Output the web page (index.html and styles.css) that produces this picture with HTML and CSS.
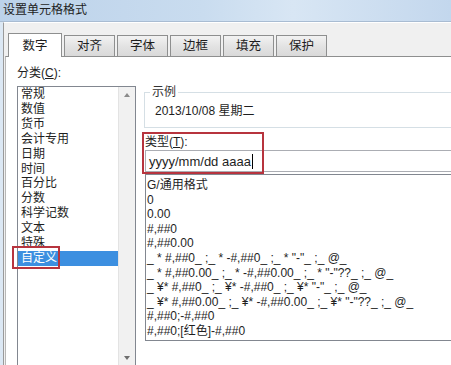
FILE: index.html
```html
<!DOCTYPE html>
<html lang="zh-CN">
<head>
  <meta charset="UTF-8" />
  <title>设置单元格格式</title>
  <link rel="stylesheet" href="styles.css">
</head>
<body>
  <div class="titlebar">设置单元格格式</div>

  <div class="frame">
    <div class="tabs">
      <div class="tab active">数字</div>
      <div class="tab">对齐</div>
      <div class="tab">字体</div>
      <div class="tab">边框</div>
      <div class="tab">填充</div>
      <div class="tab">保护</div>
    </div>

    <div class="panel">
      <div class="category">
        <div class="label">分类(<u>C</u>):</div>
        <div class="listbox">
          <ul class="items">
            <li>常规</li>
            <li>数值</li>
            <li>货币</li>
            <li>会计专用</li>
            <li>日期</li>
            <li>时间</li>
            <li>百分比</li>
            <li>分数</li>
            <li>科学记数</li>
            <li>文本</li>
            <li>特殊</li>
            <li class="selected">自定义</li>
          </ul>
          <div class="scrollbar">
            <span class="arrow up"></span>
            <span class="arrow down"></span>
          </div>
        </div>
      </div>

      <div class="details">
        <fieldset class="sample">
          <legend>示例</legend>
          <div class="sample-value">2013/10/08 星期二</div>
        </fieldset>

        <div class="type-label">类型(<u>T</u>):</div>
        <div class="type-input">yyyy/mm/dd aaaa<span class="caret"></span></div>

        <ul class="formats">
          <li>G/通用格式</li>
          <li>0</li>
          <li>0.00</li>
          <li>#,##0</li>
          <li>#,##0.00</li>
          <li>_ * #,##0_ ;_ * -#,##0_ ;_ * "-"_ ;_ @_</li>
          <li>_ * #,##0.00_ ;_ * -#,##0.00_ ;_ * "-"??_ ;_ @_</li>
          <li>_ ¥* #,##0_ ;_ ¥* -#,##0_ ;_ ¥* "-"_ ;_ @_</li>
          <li>_ ¥* #,##0.00_ ;_ ¥* -#,##0.00_ ;_ ¥* "-"??_ ;_ @_</li>
          <li>#,##0;-#,##0</li>
          <li>#,##0;[红色]-#,##0</li>
        </ul>
      </div>

      <!-- red highlight boxes drawn over the screenshot -->
      <div class="mark mark-category"></div>
      <div class="mark mark-type"></div>
    </div>
  </div>
</body>
</html>
```

FILE: styles.css
```css
body {
  margin: 0;
  width: 451px;
  height: 365px;
  overflow: hidden;
  font-family: "Liberation Sans", "Noto Sans CJK SC", sans-serif;
  font-size: 12px;
  color: #1e1e1e;
  background: #dce8f4;
}

.titlebar {
  height: 22px;
  line-height: 20px;
  padding-left: 3px;
  background: linear-gradient(to right, #bcd2ea, #c9dcef 45%, #d8e6f4 65%, #c3d7ed);
  border-bottom: 1px solid #a9bcd2;
  box-sizing: border-box;
}

.frame {
  margin-left: 3px;
  width: 470px;
  height: 343px;
  overflow: hidden;
  background: #f0f0f0;
  border-left: 1px solid #9a9a9a;
  border-top: 1px solid #ffffff;
  box-sizing: border-box;
}

.tabs {
  display: flex;
  align-items: flex-end;
  height: 33px;
  padding-left: 4px;
  box-sizing: border-box;
}

.tab {
  width: 51px;
  height: 21px;
  line-height: 21px;
  text-align: center;
  margin-left: 2px;
  font-size: 12.5px;
  background: linear-gradient(#f2f2f2, #e3e3e3 50%, #d9d9d9);
  border: 1px solid #8e8f8f;
  border-bottom: none;
  box-sizing: border-box;
}

.tab.active {
  width: 54px;
  height: 24px;
  line-height: 24px;
  margin-left: 0;
  margin-bottom: -1px;
  background: #ffffff;
  position: relative;
  z-index: 1;
}

.panel {
  position: relative;
  display: flex;
  height: 308px;
  overflow: hidden;
  margin-left: 1px;
  background: #ffffff;
  border-top: 1px solid #8e8f8f;
  border-left: 1px solid #b8b8b8;
}

.category {
  padding: 9px 0 0 11px;
}

.label {
  line-height: 15px;
  margin-bottom: 5px;
}

.listbox {
  display: flex;
  width: 119px;
  height: 290px;
  border: 1px solid #828790;
  box-sizing: border-box;
}

.items {
  list-style: none;
  margin: 0;
  padding: 0;
  width: 100px;
}

.items li {
  line-height: 14.9px;
  padding-left: 3px;
}

.items li.selected {
  background: #3c8fe0;
  color: #ffffff;
}

.scrollbar {
  display: flex;
  flex-direction: column;
  justify-content: space-between;
  align-items: center;
  width: 17px;
  padding: 6px 0 15px;
  background: #f1f1f1;
  border-left: 1px solid #e3e3e3;
  box-sizing: border-box;
}

.arrow {
  width: 0;
  height: 0;
  border-left: 3.5px solid transparent;
  border-right: 3.5px solid transparent;
}

.arrow.up {
  border-bottom: 4px solid #8a8a8a;
}

.arrow.down {
  border-top: 4px solid #6e6e6e;
}

.details {
  flex: 1;
  padding: 28px 0 0 8px;
}

.sample {
  margin: 0;
  padding: 4px 10px 6px;
  border: 1px solid #d5dfe5;
  border-right: none;
  height: 43px;
  box-sizing: border-box;
}

.sample legend {
  padding: 0 2px;
  margin-left: -5px;
  line-height: 15px;
  color: #333;
}

.sample-value {
  line-height: 15px;
}

.type-label {
  margin: 7px 0 0 1px;
  line-height: 15px;
}

.type-input {
  display: flex;
  align-items: center;
  height: 22px;
  margin-left: 1px;
  padding-left: 3px;
  font-size: 13px;
  border: 1px solid #abadb3;
  border-right: none;
  box-sizing: border-box;
}

.caret {
  width: 1px;
  height: 15px;
  background: #000;
  margin-left: 1px;
}

.formats {
  list-style: none;
  margin: 2px 0 0 1px;
  padding: 3px 0 2px 1px;
  border: 1px solid #828790;
  border-right: none;
  height: 167px;
  box-sizing: border-box;
}

.formats li {
  line-height: 14.6px;
  white-space: nowrap;
}

.mark {
  position: absolute;
  border: 2px solid #b7343e;
  box-sizing: border-box;
}

.mark-category {
  left: 6px;
  top: 189px;
  width: 48px;
  height: 23px;
}

.mark-type {
  left: 136px;
  top: 75px;
  width: 122px;
  height: 42px;
}
```
